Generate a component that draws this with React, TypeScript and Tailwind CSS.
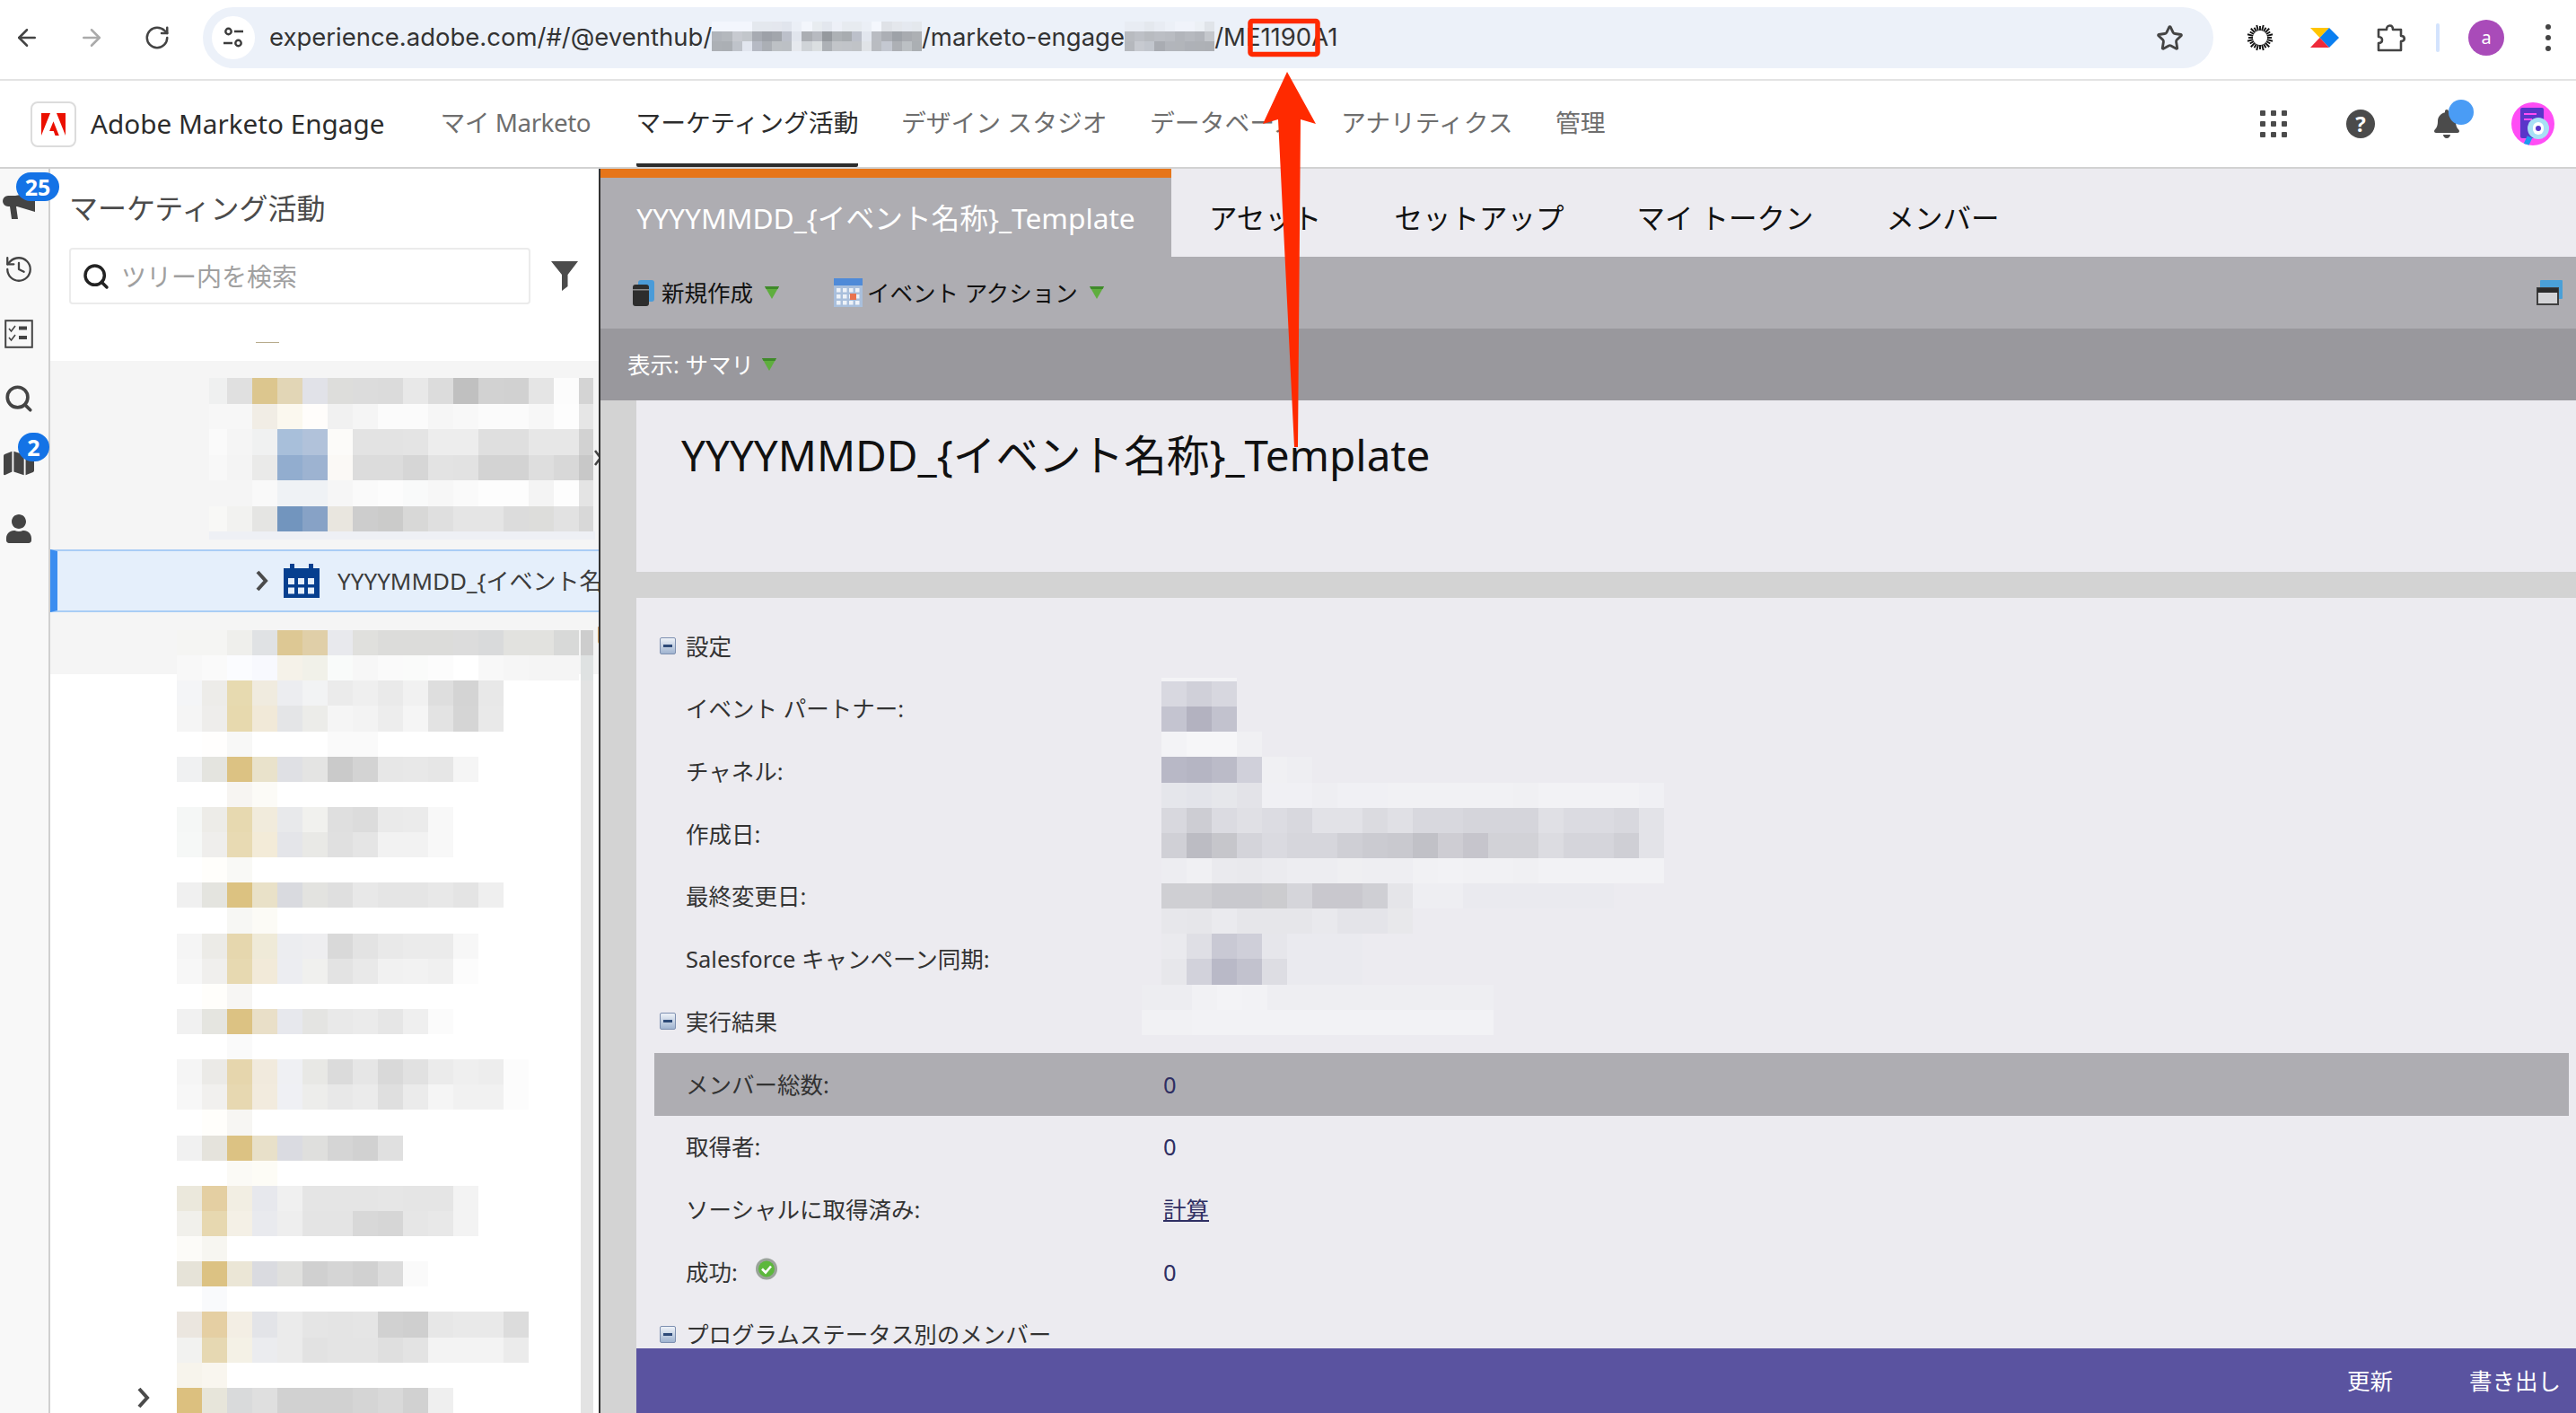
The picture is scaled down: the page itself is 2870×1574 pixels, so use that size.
import { ArrowLeft, ArrowRight, RotateCw, Star, History, Search } from "lucide-react";
import { FaBell, FaMap, FaUser } from "react-icons/fa";

type Cell = string | null;

// pixelated (redacted) regions of the screenshot, kept as colour lists
const urlMosaicA: string[][] = [
  ["f3f6fd", "f3f6fd", "f3f6fd", "f3f6fd", "e4e8ee", "e4e8ee", "e4e7ee", "e1e5ed", "ebeff6", "f3f6fc", "e8ecf0", "e3e7ee", "edf0f7", "e7ebf0", "e7ebf0", "ebeff6", "f4f7fd", "dfe2e7", "e4e7ec", "e5e9f0", "e4e8ed"],
  ["b0b4ba", "b4b8bd", "c7cad0", "c2c6cb", "a7abb2", "9da1a8", "a2a6ac", "bcc0ca", "e1e5ed", "abaeb3", "b7bac0", "95999e", "adb1b5", "a8acb0", "bcc0ca", "e2e6ee", "b9bcc2", "acafb5", "9ea2a8", "a8abb0", "adb0b4"],
  ["acb0b5", "abafb4", "bfc3ca", "e2e6ef", "b6bac4", "abafb5", "bdc1c5", "bcc0c5", "e6e9ee", "d0d4d8", "dbdfe1", "adb1b6", "c2c5c9", "c1c4c9", "c0c3c7", "e0e3e7", "b9bcc1", "c4c8d1", "adb0b5", "bcc0c4", "abafb3"],
];

const urlMosaicB: string[][] = [
  ["e8ecf3", "e8ecf3", "e4e8ee", "e8ecf3", "ecf0f7", "f0f3fa", "f0f3fa", "ecf0f5", "e0e4e9"],
  ["b8bbc0", "bdc0c6", "b8bbc0", "bbbec4", "b9bcc2", "b2b5bb", "b6b9bf", "b2b5bb", "c4c7cc"],
  ["b5b8bd", "c7cad0", "c2c6cd", "a9acb2", "b2b5bb", "b2b5ba", "aeb1b7", "aeb1b6", "adb0b5"],
];

const treeTop: Cell[][] = [
  ["eff0f0", "e0e0e0", "dcc68e", "e2d6b6", "e1e2e8", "dddddb", "dcdcdc", "dbdbdb", "e8e8e8", "dcdcdc", "c0c0c0", "d2d2d2", "d1d1d1", "e5e5e5", "fcfcfc", "d4d4d4"],
  ["f7f7f7", "f7f7f7", "f1ede5", "fbf8ef", "fffdfb", "f1f1f1", "f5f5f5", "fbfbfb", "fbfbfb", "f6f6f6", "f8f8f8", "fbfbfb", "fbfbfb", "f7f7f7", "fdfdfd", "e6e6e6"],
  ["fafafa", "f5f5f5", "f0f1f1", "a8bfda", "b1c2da", "fcfbf9", "e3e3e3", "e3e3e3", "e4e4e4", "ededed", "ededed", "dfdfdf", "dfdfdf", "e7e7e7", "e7e7e7", "d2d2d2"],
  ["f8f8f8", "f4f4f4", "eaeae9", "92adcf", "9db3d1", "fbf9f6", "dcdcdc", "dcdcdc", "d6d6d6", "e3e3e3", "e2e2e2", "d3d3d3", "d3d3d3", "dedede", "d8d8d8", "c8c8c8"],
  ["f5f5f5", "f5f5f5", "f9f9f9", "eff2f5", "eff2f5", "f6f6f6", "fafafa", "fcfcfc", "f9fafa", "f7f7f7", "fafafa", "fdfdfd", "fdfdfd", "f4f4f4", "fdfdfd", "e4e4e4"],
  ["f8f8f6", "f2f2f0", "e5e5e3", "7295be", "87a2c6", "e9e6df", "cdcdcd", "cbcbca", "d8d8d7", "dfdfdf", "e5e5e5", "e5e5e5", "dcdcdc", "dddddb", "e2e2e2", "d8d8d8"],
];

// starts at x=197, last column is the scroll strip
const treeBottom: Cell[][] = [
  ["f5f5f3", "f5f5f3", "efefec", "e0e2e4", "ddc894", "e0cfa8", "e8e9ed", "e0e0dd", "dcdcda", "dcdcda", "dcdcda", "dcdcdc", "d9dadb", "e2e2df", "e2e2df", "d8d9d8"],
  ["f8f8f8", "fafafa", "fbfcff", "f8f9fe", "f5f2e9", "f1f1e9", "f9fbfa", "f7f7f7", "fafafa", "fafbfa", "fcfcfc", "ffffff", "f8f8f8", "f6f6f6", "f5f5f5", "f5f5f5"],
  ["f4f5f7", "edece9", "e7dab0", "f0ebdf", "ecedf0", "f2f3f4", "ebebeb", "efefef", "eaeaea", "f1f1f1", "dedede", "d4d4d4", "e8e8e8"],
  ["f5f5f5", "eeedeb", "e7d9ae", "f1e9d8", "e4e5e7", "ecece9", "f5f5f5", "f3f3f3", "ededed", "f5f5f5", "e3e3e3", "d5d5d5", "e9e9e9"],
  [null, "fffefd", "f8f8f7", null, null, null, "fafafa", "fafafa"],
  ["f0f1f2", "e4e4df", "dcc283", "e9e2cb", "dfe0e4", "e4e4e3", "cacaca", "d3d3d3", "e7e7e7", "e8e8e8", "e6e6e6", "f5f5f5"],
  [null, null, "f7f5f2", "fcfbf7"],
  ["f5f7f6", "edece8", "e7d9b0", "f1ebdc", "e8e9eb", "f1f1ee", "dfdfdf", "dcdcdc", "eaeaea", "ebebeb", "f8f8f8"],
  ["f6f8f7", "efeeec", "e8dab3", "f3ebd8", "e4e5e9", "e9e9e6", "e0e0e0", "e5e5e5", "f2f2f2", "f2f2f2", "f8f8f8"],
  [null, "fffefb", "f9f9f6"],
  ["f0f0f0", "e4e4df", "dcc281", "e9e1c8", "d9dadf", "e3e3e0", "dfdfdf", "e8e8e8", "e5e5e5", "e5e5e5", "e8e8e8", "e4e4e4", "efefef"],
  [null, null, "f7f7f4", "fcfbf6"],
  ["f5f5f5", "ecebe7", "e6d7ae", "efead8", "ecedf0", "eeeef0", "d9d9d9", "e3e3e3", "e9e9e9", "ebebeb", "ebebeb", "f7f7f7"],
  ["f7f7f7", "f0efed", "e7d9b1", "f2ead9", "ecedf1", "f0f0ee", "e3e3e3", "e9e9e9", "f1f1f1", "f2f2f2", "f0f0f0", "fcfcfc"],
  [null, "fffefb", "f7f6f4"],
  ["f1f1f1", "e5e5e0", "dcc283", "e9dfc8", "e7e8ed", "e4e4e2", "e9e9e9", "ebebeb", "e6e6e6", "efefef", "fbfbfb"],
  [null, null, "fafafa"],
  ["f5f5f5", "ebeae7", "e6d6ad", "f1eadd", "eff0f3", "e8e8e5", "dbdbdb", "e6e6e6", "d9d9d9", "e1e1e1", "ebebeb", "efefef", "ededed", "fcfcfc"],
  ["f7f7f7", "f1f0ee", "e7d8b1", "f2ebde", "eff0f4", "ededeb", "e8e8e8", "ebebeb", "dfdfdf", "ebebeb", "f5f5f5", "f1f1f1", "f1f1f1", "fcfcfc"],
  [null, "fffefb", "f7f6f3"],
  ["f1f1f1", "e5e3dc", "dcc283", "e8e0c9", "dadbe1", "dfdfdd", "d5d5d5", "d1d1d1", "e0e0e0"],
  [null, null, "fbfaf6", "fdfcf6"],
  ["ebe8dc", "e4cfa2", "f2eee3", "e7e8ed", "f0f0f0", "e5e5e5", "e5e5e5", "e5e5e5", "e6e6e6", "e5e5e5", "e5e5e5", "f3f3f3"],
  ["f1f0eb", "e7d8b0", "f4f0e6", "e9eaee", "eeeeee", "e4e4e4", "e4e4e4", "d8d8d8", "d6d6d6", "e6e6e6", "e8e8e8", "f3f3f3"],
  ["fcfbf8", "f7f6f1"],
  ["e6e3d8", "dcc283", "ebe6d6", "dadbe0", "e0e0de", "d0d0d0", "d5d5d5", "d1d1d1", "dcdcdc", "fafafa"],
  [null, "f9fafc"],
  ["ebe6df", "e5cfa3", "f3eee4", "e3e4e8", "ebebeb", "e5e5e5", "e4e4e4", "e5e5e5", "d1d1d1", "cfcfcf", "e7e7e7", "e9e9e9", "e9e9e9", "dcdcdc"],
  ["f2f2f0", "e6d8b2", "f4f1e6", "ebecef", "ebebeb", "e2e2e2", "e4e4e4", "e4e4e4", "dfdfdf", "e3e3e3", "f3f3f3", "f3f3f3", "f3f3f3", "ebebeb"],
  ["f7f4ec", "f9f6ef"],
  ["dcc07f", "e7e5da", "d9dadb", "dfdfdf", "d1d1d1", "d1d1d1", "d1d1d1", "d5d5d5", "d9d9d9", "d1d1d1", "efefef"],
];

// detail values, first cell starts at x=1295
const valueMosaic: Cell[][] = [
  ["d8d8e0", "d0d0d9", "d7d7df"],
  ["c4c4d0", "b3b2c0", "c2c2ce"],
  ["f3f3f6", "f6f6f8", "f6f6f8", "f0f0f3"],
  ["b8b8c6", "b5b5c3", "bbbbc8", "d0d0da", "f0f0f3", "eeeef2"],
  ["e5e6eb", "e3e4ea", "e6e7eb", "e3e3e8", "f0f0f4", "f0f0f4", "eeeef2", "f0f0f4", "f0f0f4", "f1f1f4", "f1f1f4", "f1f1f4", "f1f1f4", "f1f1f4", "f0f0f3", "f2f2f5", "f2f2f5", "f2f2f5", "f2f2f5", "f0f0f4"],
  ["d8d8de", "cdcdd3", "dbdbe1", "e0e0e5", "dcdce2", "d8d8de", "e2e2e7", "e2e2e7", "dbdbe0", "e0e0e5", "d8d8de", "d8d8de", "d5d5db", "d5d5db", "d5d5db", "e0e0e5", "dbdbe1", "dbdbe1", "d8d8de", "e3e3e8"],
  ["d0d0d6", "bcbcc3", "c6c6cb", "d4d4da", "dadae0", "d6d6dc", "d6d6dc", "cfcfd5", "cbcbd1", "c9c9cf", "c1c1c7", "cecdd3", "c6c5cc", "d2d2d7", "d2d2d7", "dcdce1", "d5d5db", "d5d5db", "cfcfd5", "e3e3e8"],
  ["ededf1", "f0f0f3", "eaeaee", "e9e9ed", "ebebef", "ededf1", "ededf1", "efeff2", "eeeef2", "eeeef2", "f1f1f4", "f2f2f5", "f1f1f4", "f1f1f4", "f0f0f3", "f2f2f5", "f2f2f5", "f2f2f5", "f2f2f5", "f2f2f5"],
  ["cfcfd3", "cfcfd3", "c9c9ce", "c9c9ce", "cccccf", "d5d5da", "c9c8ce", "c9c8ce", "cfcfd4", "e5e5e9", "eeeef2", "eeeef2", "eaeaef", "eaeaef", "eaeaef", "eaeaef", "eaeaef", "eaeaef"],
  ["e7e7eb", "e6e6ea", "eaeaee", "e6e6ea", "e6e6ea", "e6e6ea", "e9e9ed", "e4e4e9", "e4e4e9", "e8e8eb"],
  ["eaeaee", "dfdfe5", "c9c9d4", "cfcfd9", "e6e6eb", "eaeaef", "eaeaef", "eaeaef"],
  ["e7e7eb", "d2d2db", "b9b9c7", "c2c2ce", "dddde3", "eaeaef", "eaeaef", "eaeaef"],
  ["ededf1", "ededf1", "f1f1f4", "f3f3f6", "f2f2f5", "eeeef2", "eeeef2", "eeeef2", "eeeef2", "eeeef2", "eeeef2", "eeeef2", "eeeef2", "eeeef2"],
  ["f1f1f4", "f1f1f4", "f2f2f5", "f2f2f5", "f2f2f5", "f2f2f5", "f2f2f5", "f2f2f5", "f2f2f5", "f2f2f5", "f2f2f5", "f2f2f5", "f2f2f5", "f2f2f5"],
];

function UrlMosaic({ rows, cell = 11.14 }: { rows: string[][]; cell?: number }) {
  return (
    <span className="flex flex-col flex-none -translate-y-[2px]">
      {rows.map((row, i) => (
        <span key={i} className="flex h-[11px]">
          {row.map((c, j) => (
            <span key={j} className="h-full flex-none" style={{ width: cell, background: `#${c}` }} />
          ))}
        </span>
      ))}
    </span>
  );
}

function MosaicRow({ row, strip, indent = 0, h = 28.13, firstW = 28, lastW = 28 }: { row: Cell[]; strip?: string; indent?: number; h?: number; firstW?: number; lastW?: number }) {
  return (
    <div className="flex relative" style={{ height: h, marginLeft: indent }}>
      {row.map((c, j) => (
        <div
          key={j}
          className="h-full flex-none"
          style={{ width: j === 0 ? firstW : j === row.length - 1 ? lastW : 28, background: c ? `#${c}` : "transparent" }}
        />
      ))}
      {strip && <div className="absolute top-0 bottom-0" style={{ left: 450, width: 14, background: `#${strip}` }} />}
    </div>
  );
}

function SiteTuneIcon() {
  return (
    <svg width="26" height="26" viewBox="0 0 26 26" fill="none" stroke="#3c3c3c" strokeWidth="2.4">
      <circle cx="7.5" cy="6" r="3.2" />
      <path d="M14 6h10M2 19h10" />
      <circle cx="18.5" cy="19" r="3.2" />
    </svg>
  );
}

function SunburstIcon() {
  const spokes = Array.from({ length: 24 }, (_, i) => (i * 360) / 24);
  return (
    <svg width="30" height="30" viewBox="0 0 30 30" stroke="#111" strokeWidth="1.9">
      {spokes.map((a, i) => (
        <line key={a} x1="15" y1={i % 2 ? 0.5 : 2} x2="15" y2="7" transform={`rotate(${a} 15 15)`} />
      ))}
    </svg>
  );
}

function DiamondIcon() {
  return (
    <svg width="32" height="22" viewBox="0 0 32 22">
      <polygon points="0,0 21,0 10.5,11" fill="#ffc400" />
      <polygon points="21,0 32,11 21,22 10.5,11" fill="#0a7ff0" />
      <polygon points="10.5,11 21,22 0,22" fill="#ee2a3a" />
    </svg>
  );
}

function PuzzleIcon() {
  return (
    <svg width="32" height="32" viewBox="0 0 32 32" fill="none" stroke="#444" strokeWidth="2.6" strokeLinejoin="round">
      <path d="M2 7h9c0-6 7-6 7 0h9v7c5 0 5 6 0 6v10H2v-8c3 0 4-2 4-3.5S5 15 2 15z" />
    </svg>
  );
}

function AdobeMark() {
  return (
    <svg width="27" height="25" viewBox="0 2 24 20" preserveAspectRatio="none" fill="#eb1000">
      <path d="M15.1 2H24v20zM8.9 2H0v20zM12 9.4 17.6 22h-3.8l-1.6-4H8.1z" />
    </svg>
  );
}

function MegaphoneIcon() {
  return (
    <svg width="36" height="30" viewBox="0 0 36 30" fill="#444">
      <path d="M0 10a6 6 0 0 1 6-6h8L36 0v22L16 16h-1l2 14h-7L8 16H6a6 6 0 0 1-6-6z" />
    </svg>
  );
}

function MarketoAvatar() {
  return (
    <div className="relative w-[48px] h-[48px] rounded-full bg-[#ff4df5] overflow-hidden flex-none">
      <div className="absolute left-[10px] top-[6px] w-[26px] h-[34px] rounded-[2px] bg-[#5a35c9]" />
      <div className="absolute left-[14px] top-[12px] w-[14px] h-[2px] bg-[#ff4df5]" />
      <div className="absolute left-[14px] top-[18px] w-[9px] h-[2px] bg-[#ff4df5]" />
      <div className="absolute left-[18px] top-[17px] w-[24px] h-[24px] rounded-full bg-[#a8e0f5] flex items-center justify-center">
        <div className="w-[12px] h-[14px] rounded-full bg-[#fff] flex items-center justify-center">
          <div className="w-[6px] h-[6px] rounded-full bg-[#5a35c9]" />
        </div>
      </div>
      <div className="absolute left-[15px] top-[38px] w-[6px] h-[12px] rotate-[25deg] bg-[#1d9bf0]" />
    </div>
  );
}

function ChecklistIcon() {
  return (
    <svg width="32" height="32" viewBox="0 0 32 32" fill="none" stroke="#444">
      <rect x="1.2" y="1.2" width="29.6" height="29.6" strokeWidth="2" />
      <path d="M5 10l2.5 3L12 7M5 20l2.5 3L12 17" strokeWidth="1.6" />
      <path d="M16 9.5h9M16 20h9" strokeWidth="4" />
    </svg>
  );
}

function Funnel() {
  return (
    <svg width="30" height="33" viewBox="0 0 30 33" fill="#4b4b4b">
      <path d="M0 0h30L18.5 15v13L12 33V15z" />
    </svg>
  );
}

function CalendarNavy() {
  return (
    <svg width="40" height="38" viewBox="0 0 40 38" fill="#063f8f">
      <path d="M0 5h7V0h5v5h16V0h5v5h7v33H0z" />
      {[0, 1, 2].map((c) =>
        [0, 1].map((r) => <rect key={`${c}${r}`} x={5 + c * 11} y={16 + r * 10.5} width="7" height="7" fill="#e5effb" />)
      )}
    </svg>
  );
}

function GreenArrow() {
  return (
    <svg width="16" height="14" viewBox="0 0 16 14" className="flex-none">
      <polygon points="0,0 16,0 8,14" fill="#5fae3e" />
      <polygon points="0,0 16,0 14.5,3 1.5,3" fill="#3f8a2a" />
    </svg>
  );
}

function BookIcon() {
  return (
    <svg width="24" height="29" viewBox="0 0 24 29">
      <rect x="6" y="0" width="18" height="24" rx="3" fill="#4a9bd8" />
      <rect x="0" y="5" width="18" height="24" rx="3" fill="#2d2d2d" />
      <rect x="0" y="10" width="18" height="1.5" fill="#8a8a8a" />
    </svg>
  );
}

function SmallCalendar() {
  return (
    <svg width="32" height="32" viewBox="0 0 32 32">
      <rect width="32" height="32" fill="#a9bfdc" />
      <rect width="32" height="8" fill="#4f8ad8" />
      {[0, 1, 2, 3].map((c) =>
        [0, 1, 2].map((r) => <rect key={`${c}${r}`} x={3 + c * 7} y={11 + r * 7} width="4.5" height="4.5" fill="#eef2f8" />)
      )}
      <rect x="18" y="17" width="7" height="7" fill="#e9734f" />
    </svg>
  );
}

function WindowsIcon() {
  return (
    <svg width="29" height="28" viewBox="0 0 29 28">
      <rect x="4" y="0" width="25" height="21" rx="1" fill="#4aa0d8" />
      <rect x="1" y="9" width="23" height="18" fill="#d3d3d6" stroke="#3f3f3f" strokeWidth="2" />
      <rect x="1" y="9" width="23" height="5" fill="#2b2b2b" />
    </svg>
  );
}

function SectionToggle() {
  return (
    <span className="flex-none w-[18px] h-[19px] rounded-[2px] bg-[linear-gradient(#eef2f8,#9fb3d0)] border border-[#7d8fb0] flex items-center justify-center">
      <span className="w-[10px] h-[3px] bg-[#2e4a78]" />
    </span>
  );
}

function CheckBadge() {
  return (
    <svg width="24" height="25" viewBox="0 0 24 25" className="-translate-y-[3px]">
      <circle cx="12" cy="12.5" r="12" fill="#9aa39a" />
      <circle cx="12" cy="12.5" r="9" fill="#5cb83c" />
      <path d="M7 12.5l4 4 6-7" fill="none" stroke="#fff" strokeWidth="2.6" />
    </svg>
  );
}

function Section({ title }: { title: string }) {
  return (
    <div className="flex items-center h-[69.7px] pl-[6px] gap-[11px] text-[#333]">
      <SectionToggle />
      <span>{title}</span>
    </div>
  );
}

function Row({ label, value, extra, active }: { label: string; value?: React.ReactNode; extra?: React.ReactNode; active?: boolean }) {
  return (
    <div className={`flex items-center h-[69.7px] pl-[35px] ${active ? "bg-[#aeadb2]" : ""}`}>
      <div className="w-[532px] flex items-center gap-[20px] text-[#333]">
        <span>{label}</span>
        {extra}
      </div>
      <div className="text-[#2f2f63]">{value}</div>
    </div>
  );
}

export default function App() {
  const navItems = ["マイ Marketo", "マーケティング活動", "デザイン スタジオ", "データベース", "アナリティクス", "管理"];
  const subTabs = ["アセット", "セットアップ", "マイ トークン", "メンバー"];

  return (
    <div className="relative w-[2870px] h-[1574px] overflow-hidden flex flex-col bg-white [font-family:'Noto_Sans','Noto_Sans_CJK_JP',sans-serif]">
      {/* Browser toolbar */}
      <div className="h-[90px] flex-none flex items-center border-b-2 border-[#e3e3e3] pb-[4px]">
        <ArrowLeft className="ml-[15px] flex-none" size={30} color="#444" strokeWidth={2} />
        <ArrowRight className="ml-[42px] flex-none" size={30} color="#aaa" strokeWidth={2} />
        <RotateCw className="ml-[43px] flex-none" size={30} color="#444" strokeWidth={2} />
        <div className="ml-[36px] w-[2240px] h-[68px] flex-none rounded-full bg-[#ecf1f9] flex items-center">
          <div className="ml-[10px] w-[48px] h-[48px] rounded-full bg-white flex items-center justify-center flex-none">
            <SiteTuneIcon />
          </div>
          <div className="ml-[16px] flex items-center text-[27.5px] text-[#333] [font-family:Inter,sans-serif]">
            <span>experience.adobe.com/#/@eventhub/</span>
            <UrlMosaic rows={urlMosaicA} />
            <span>/marketo-engage</span>
            <UrlMosaic rows={urlMosaicB} />
            <span>/ME1190A1</span>
          </div>
          <Star className="ml-auto mr-[33px] flex-none" size={31} color="#444" strokeWidth={2.2} />
        </div>
        <div className="ml-[37px] flex-none"><SunburstIcon /></div>
        <div className="ml-[41px] flex-none"><DiamondIcon /></div>
        <div className="ml-[42px] flex-none"><PuzzleIcon /></div>
        <div className="ml-[34px] w-[4px] h-[32px] rounded-full bg-[#d3e3fd] flex-none" />
        <div className="ml-[32px] w-[40px] h-[40px] rounded-full bg-[#a94bb9] text-white text-[20px] flex items-center justify-center flex-none">a</div>
        <div className="ml-[46px] flex flex-col gap-[6px] flex-none">
          <span className="w-[6px] h-[6px] rounded-full bg-[#444]" />
          <span className="w-[6px] h-[6px] rounded-full bg-[#444]" />
          <span className="w-[6px] h-[6px] rounded-full bg-[#444]" />
        </div>
      </div>

      {/* Marketo nav */}
      <div className="h-[98px] flex-none flex items-center border-b-2 border-[#d2d2d2]">
        <div className="ml-[34px] w-[51px] h-[51px] rounded-[8px] border-2 border-[#dcdcdc] flex items-center justify-center flex-none">
          <AdobeMark />
        </div>
        <div className="ml-[16px] text-[29.7px] text-[#2c2c2c] whitespace-nowrap">Adobe Marketo Engage</div>
        <div className="ml-[62px] self-stretch flex gap-[47.5px]">
          {navItems.map((item, i) => (
            <div
              key={item}
              className={`flex items-center text-[27.8px] pt-[2px] whitespace-nowrap border-b-4 rounded-b-[2px] ${i === 0 ? "mr-[3px] tracking-[-0.5px]" : ""} ${i === 1 ? "border-[#2c2c2c] text-[#2c2c2c]" : "border-transparent text-[#6e6e6e]"}`}
            >
              {item}
            </div>
          ))}
        </div>
        <div className="ml-auto flex items-center flex-none">
          <div className="grid grid-cols-3 gap-[6px]">
            {Array.from({ length: 9 }).map((_, i) => (
              <span key={i} className="w-[6px] h-[6px] bg-[#4b4b4b] rounded-[1px]" />
            ))}
          </div>
          <div className="ml-[66px] w-[32px] h-[32px] rounded-full bg-[#4b4b4b] text-white font-bold text-[24px] leading-none flex items-center justify-center">?</div>
          <div className="relative ml-[66px] w-[28px] h-[34px] flex items-center justify-center">
            <FaBell size={32} color="#4b4b4b" />
            <span className="absolute left-[16px] -top-[10px] w-[28px] h-[28px] rounded-full bg-[#4a9cf5]" />
          </div>
          <div className="ml-[58px] mr-[24px]"><MarketoAvatar /></div>
        </div>
      </div>

      <div className="flex-1 flex min-h-0">
        {/* Icon rail */}
        <div className="relative w-[56px] flex-none bg-[#f8f8f8] border-r-2 border-[#d0d0d0] flex flex-col items-center pr-[12px]">
          <div className="mt-[26px]"><MegaphoneIcon /></div>
          <History className="mt-[39px]" size={34} color="#444" strokeWidth={1.6} />
          <div className="mt-[39px]"><ChecklistIcon /></div>
          <Search className="mt-[39px]" size={34} color="#444" strokeWidth={2.6} />
          <FaMap className="mt-[38px]" size={34} color="#444" />
          <FaUser className="mt-[40px]" size={32} color="#444" />
          <span className="absolute left-[18px] top-[4px] w-[48px] h-[32px] rounded-full bg-[#1473e6] text-white font-bold text-[25px] leading-none flex items-center justify-center z-10">25</span>
          <span className="absolute left-[20px] top-[294px] w-[35px] h-[32px] rounded-full bg-[#1473e6] text-white font-bold text-[25px] leading-none flex items-center justify-center z-10">2</span>
        </div>

        {/* Tree panel */}
        <div className="relative w-[613px] flex-none border-r-2 border-[#333] overflow-hidden flex flex-col">
          <div className="ml-[21px] mt-[24px] h-[40px] flex items-center text-[32px] text-[#4b4b4b] whitespace-nowrap">マーケティング活動</div>
          <div className="ml-[21px] mt-[24px] flex items-center flex-none">
            <div className="w-[514px] h-[63px] rounded-[4px] border-2 border-[#ebebeb] flex items-center pl-[12px] gap-[12px]">
              <Search size={32} color="#222" strokeWidth={2.6} />
              <span className="text-[28px] text-[#a0a0a0]">ツリー内を検索</span>
            </div>
            <div className="ml-[23px]"><Funnel /></div>
          </div>
          <div className="ml-[229px] mt-[42px] w-[26px] h-[1px] bg-[#b7ab8c] flex-none" />
          <div className="mt-[20px] h-[210px] flex-none bg-[#f5f5f5] pt-[19px]">
            {treeTop.map((row, i) => (
              <MosaicRow key={i} row={row} indent={177} h={28.5} firstW={20} lastW={16} />
            ))}
            <div className="ml-[177px] w-[430px] h-[9px] bg-[#eef0f5]" />
          </div>
          <div className="h-[70px] flex-none flex items-center bg-[#e5effb] border-y-2 border-[#a9cdf5] border-l-[8px] border-l-[#3b8df0] text-[26px] text-[#3c3c3c] whitespace-nowrap">
            <svg width="14" height="24" viewBox="0 0 14 24" fill="none" stroke="#4b4b4b" strokeWidth="4" className="ml-[221px] flex-none">
              <path d="M2 2l9 10-9 10" />
            </svg>
            <div className="ml-[17px] flex-none"><CalendarNavy /></div>
            <span className="ml-[20px]">YYYYMMDD_{"{"}イベント名称{"}"}_Template</span>
          </div>
          <div className="flex-1 min-h-0 pt-[20px] bg-[linear-gradient(#f5f5f5_69px,#ffffff_69px)]">
            {treeBottom.map((row, i) => (
              <MosaicRow key={i} row={row} indent={141} strip={i < 1 ? "cdcdcd" : i < 2 ? "dfe2e2" : "e3e3e3"} />
            ))}
          </div>
          <svg width="8" height="18" viewBox="0 0 8 18" fill="none" stroke="#444" strokeWidth="2.5" className="absolute left-[606px] top-[313px]">
            <path d="M1 1l6 8-6 8" />
          </svg>
          <span className="absolute left-[605px] top-[508px] text-[24px] leading-none text-[#444]">ヒ</span>
          <svg width="14" height="24" viewBox="0 0 14 24" fill="none" stroke="#4b4b4b" strokeWidth="4" className="absolute left-[97px] top-[1357px]">
            <path d="M2 2l9 10-9 10" />
          </svg>
        </div>

        {/* Program detail */}
        <div className="flex-1 min-w-0 flex flex-col text-[25.5px]">
          <div className="h-[98px] flex-none flex bg-[#ecebf0]">
            <div className="w-[636px] bg-[#aeadb2] border-t-[10px] border-[#e67519] text-white text-[31.7px] flex items-center justify-center pt-[1px] whitespace-nowrap">
              YYYYMMDD_{"{"}イベント名称{"}"}_Template
            </div>
            <div className="ml-[42px] flex items-center gap-[81px] text-[31.5px] text-[#111] whitespace-nowrap pt-[11px]">
              {subTabs.map((t) => (
                <span key={t}>{t}</span>
              ))}
            </div>
          </div>
          <div className="h-[80px] flex-none bg-[#aeadb2] flex items-center text-[#111]">
            <div className="ml-[36px]"><BookIcon /></div>
            <span className="ml-[8px]">新規作成</span>
            <div className="ml-[13px]"><GreenArrow /></div>
            <div className="ml-[61px]"><SmallCalendar /></div>
            <span className="ml-[5px] whitespace-nowrap">イベント アクション</span>
            <div className="ml-[13px]"><GreenArrow /></div>
            <div className="ml-auto mr-[15px]"><WindowsIcon /></div>
          </div>
          <div className="h-[80px] flex-none bg-[#99989d] flex items-center text-white pl-[30px]">
            <span>表示: サマリ</span>
            <div className="ml-[9px]"><GreenArrow /></div>
          </div>
          <div className="flex-1 min-h-0 bg-[#d3d3d3] pl-[40px] flex flex-col">
            <div className="h-[191px] flex-none bg-[#ecebf0] pl-[50px] pt-[28px] text-[47.6px] leading-[66px] text-[#111] whitespace-nowrap">
              YYYYMMDD_{"{"}イベント名称{"}"}_Template
            </div>
            <div className="mt-[29px] flex-1 min-h-0 relative bg-[#ecebf0] overflow-hidden">
              <div className="pt-[19px] pl-[20px] pr-[8px]">
                <Section title="設定" />
                <Row label="イベント パートナー:" />
                <Row label="チャネル:" />
                <Row label="作成日:" />
                <Row label="最終変更日:" />
                <Row label="Salesforce キャンペーン同期:" />
                <Section title="実行結果" />
                <Row label="メンバー総数:" value="0" active />
                <Row label="取得者:" value="0" />
                <Row label="ソーシャルに取得済み:" value={<span className="underline">計算</span>} />
                <Row label="成功:" value="0" extra={<CheckBadge />} />
                <Section title="プログラムステータス別のメンバー" />
              </div>
              {/* redacted values */}
              <div className="absolute left-[585px] top-[89px]">
                <MosaicRow row={["f3f3f6", "f3f3f6", "f3f3f6"]} h={4} />
                {valueMosaic.map((row, i) => (
                  <MosaicRow key={i} row={row} h={28.13} indent={i >= 12 ? -22 : 0} />
                ))}
              </div>
              <div className="absolute left-0 right-0 bottom-0 h-[72px] bg-[#5a53a0] text-white flex items-center justify-end pr-[17px] gap-[85px]">
                <span>更新</span>
                <span>書き出し</span>
              </div>
            </div>
          </div>
        </div>
      </div>

      {/* Red annotation drawn over the screenshot */}
      <svg className="absolute inset-0 pointer-events-none" width="2870" height="1574" viewBox="0 0 2870 1574">
        <rect x="1393" y="23.5" width="75" height="37" rx="2" fill="none" stroke="#ff2a00" strokeWidth="5.5" />
        <polygon points="1434,80 1466,138 1449,133 1446,498 1442,498 1424,133 1407,138" fill="#ff2a00" />
      </svg>
    </div>
  );
}
